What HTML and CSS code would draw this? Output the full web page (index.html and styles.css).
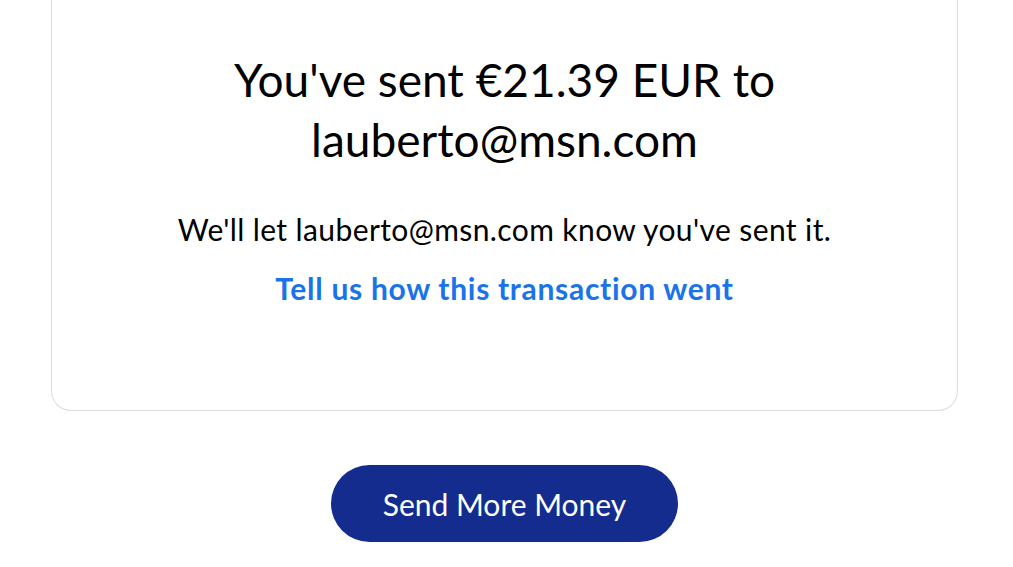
FILE: index.html
```html
<!DOCTYPE html>
<html lang="en">
<head>
<meta charset="utf-8">
<title>Payment sent</title>
<link rel="stylesheet" href="styles.css">
</head>
<body>
<main class="page">
  <section class="card">
    <h1 class="title">You've sent €21.39 EUR to lauberto@msn.com</h1>
    <p class="note">We'll let lauberto@msn.com know you've sent it.</p>
    <a class="feedback" href="#">Tell us how this transaction went</a>
  </section>
  <div class="actions">
    <a class="btn-primary" href="#">Send More Money</a>
  </div>
</main>
</body>
</html>
```
FILE: styles.css
```css
html, body {
  margin: 0;
  padding: 0;
  background: #ffffff;
}
body {
  font-family: Lato, "Open Sans", "Liberation Sans", sans-serif;
  color: #000000;
}
.page {
  padding: 0 55px 0 51px;
}
.card {
  border: 1px solid #dcdcdc;
  border-top: none;
  border-radius: 0 0 20px 20px;
  padding: 50px 40px 104px;
  display: flex;
  flex-direction: column;
  align-items: center;
  text-align: center;
}
.title {
  font-size: 46px;
  font-weight: 400;
  line-height: 60px;
  margin: 0;
  max-width: 600px;
}
.note {
  font-size: 30px;
  line-height: 36px;
  letter-spacing: 0.4px;
  margin: 41px 0 0;
}
.feedback {
  margin-top: 23px;
  font-size: 30px;
  line-height: 36px;
  letter-spacing: 0.7px;
  font-weight: 700;
  color: #1a73e8;
  text-decoration: none;
}
.actions {
  display: flex;
  justify-content: center;
  padding-top: 54px;
}
.btn-primary {
  display: flex;
  align-items: center;
  justify-content: center;
  width: 347px;
  height: 77px;
  border-radius: 39px;
  background: #142c8e;
  color: #ffffff;
  font-size: 30px;
  text-decoration: none;
}
```
